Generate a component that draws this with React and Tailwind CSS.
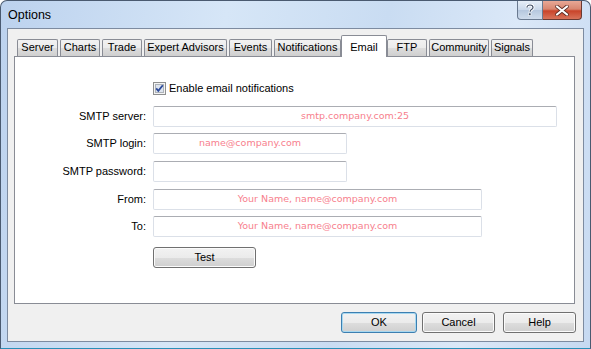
import React from "react";

const tabs = [
  { label: "Server", w: "w-[41px]", ml: "ml-0" },
  { label: "Charts", w: "w-[40px]", ml: "ml-[2px]" },
  { label: "Trade", w: "w-[40px]", ml: "ml-[2px]" },
  { label: "Expert Advisors", w: "w-[83px]", ml: "ml-[2px]" },
  { label: "Events", w: "w-[43px]", ml: "ml-[2px]" },
  { label: "Notifications", w: "w-[67px]", ml: "ml-[2px]" },
  { label: "Email", w: "w-[46px]", ml: "ml-0", active: true },
  { label: "FTP", w: "w-[40px]", ml: "ml-0" },
  { label: "Community", w: "w-[60px]", ml: "ml-[2px]" },
  { label: "Signals", w: "w-[42px]", ml: "ml-[2px]" },
];

const Tab = ({ label, w, ml, active }) =>
  active ? (
    <div
      className={`${w} ${ml} relative z-10 h-[22px] mb-[-1px] flex justify-center pt-[3px] bg-white border border-b-0 border-[#898c95] rounded-t-[2px]`}
    >
      {label}
    </div>
  ) : (
    <div
      className={`${w} ${ml} h-[17px] flex items-center justify-center pb-[1px] border border-b-0 border-[#898c95] rounded-t-[2px] bg-[linear-gradient(#f2f2f2,#ebebeb_50%,#dddddd_51%,#cfcfcf)]`}
    >
      {label}
    </div>
  );

const Field = ({ label, w, value, mt }) => (
  <div className={`flex items-center ${mt}`}>
    <div className="w-[131px] text-right">{label}</div>
    <div
      className={`${w} ml-[7px] h-[21px] flex items-center justify-center rounded-[2px] border border-[#dbe0e8] border-t-[#abadb3] bg-white text-[9.5px] text-[#f7808d] font-['DejaVu_Sans',sans-serif]`}
    >
      {value}
    </div>
  </div>
);

const Button = ({ children, w, focus }) => (
  <div
    className={`${w} h-[21px] flex items-center justify-center rounded-[3px] border ${
      focus ? "border-[#3c7fb1] shadow-[inset_0_0_0_1px_#a8d8f0]" : "border-[#707070] shadow-[inset_0_0_0_1px_#fbfbfb]"
    } bg-[linear-gradient(#f2f2f2,#ebebeb_50%,#dddddd_51%,#cfcfcf)]`}
  >
    {children}
  </div>
);

export default function App() {
  return (
    <div className="w-[591px] h-[349px] flex flex-col rounded-t-[7px] border border-[#4a5a70] border-b-[#2a8fb8] bg-[linear-gradient(100deg,#bcd2ee,#d6e6f7_35%,#c9dcf2_60%,#dbe8f8_80%,#c6d9f1)] font-['Liberation_Sans',Arial,sans-serif] text-[11px] text-black overflow-hidden">
      {/* title bar */}
      <div className="h-[27px] flex items-start">
        <div className="pl-[7px] pt-[5px] text-[12.5px] text-black">Options</div>
        <div className="flex-1" />
        <div className="flex mr-[8px]">
          <div className="w-[26px] h-[19px] flex items-center justify-center rounded-bl-[4px] border border-t-0 border-[#6a7a90] bg-[linear-gradient(#e6eef8,#c9d8ea_50%,#b5c7de_51%,#cfdcec)]">
            <svg width="10" height="12" viewBox="0 0 10 12">
              <path
                d="M2 3.5C2 1.8 3.3 1 5 1s3 .8 3 2.4c0 1.6-1.6 2-2.3 2.8-.4.4-.5.9-.5 1.6"
                fill="none"
                stroke="#fff"
                strokeWidth="3"
              />
              <path
                d="M2 3.5C2 1.8 3.3 1 5 1s3 .8 3 2.4c0 1.6-1.6 2-2.3 2.8-.4.4-.5.9-.5 1.6"
                fill="none"
                stroke="#45536a"
                strokeWidth="1.2"
              />
              <rect x="3.6" y="9" width="2.4" height="2.4" fill="#45536a" stroke="#fff" strokeWidth="0.6" />
            </svg>
          </div>
          <div className="w-[39px] h-[19px] flex items-center justify-center rounded-br-[4px] border border-t-0 border-l-0 border-[#6a3a32] bg-[linear-gradient(#e8a896,#d88670_45%,#c9442a_55%,#d8735a)]">
            <svg width="14" height="11" viewBox="0 0 14 11">
              <path d="M2 1.5 L12 9.5 M12 1.5 L2 9.5" stroke="#5a2a22" strokeWidth="3.6" strokeLinecap="round" />
              <path d="M2 1.5 L12 9.5 M12 1.5 L2 9.5" stroke="#fff" strokeWidth="2.2" strokeLinecap="round" />
            </svg>
          </div>
        </div>
      </div>

      {/* client area */}
      <div className="mx-[6px] h-[314px] flex flex-col border border-[#7d8ba0] bg-[#f0f0f0] pl-[6px] pt-[6px]">
        <div className="h-[21px] flex items-end pl-[3px]">
          {tabs.map((t) => (
            <Tab key={t.label} {...t} />
          ))}
        </div>

        <div className="w-[561px] h-[248px] border border-[#898c95] bg-white flex flex-col pt-[25px]">
          <div className="flex items-center h-[13px] pl-[138px]">
            <svg width="13" height="13" viewBox="0 0 13 13">
              <rect x="0.5" y="0.5" width="12" height="12" fill="#f4f4f4" stroke="#8e8f8f" />
              <rect x="2.5" y="2.5" width="8" height="8" fill="#dde4ef" stroke="#aeb3b9" />
              <path d="M3.2 6.4 L5.3 8.8 L9.8 3.2" fill="none" stroke="#2c4a9a" strokeWidth="1.8" />
            </svg>
            <span className="ml-[3px]">Enable email notifications</span>
          </div>

          <Field label="SMTP server:" w="w-[404px]" value="smtp.company.com:25" mt="mt-[11px]" />
          <Field label="SMTP login:" w="w-[194px]" value="name@company.com" mt="mt-[6px]" />
          <Field label="SMTP password:" w="w-[194px]" value="" mt="mt-[7px]" />
          <Field label="From:" w="w-[329px]" value="Your Name, name@company.com" mt="mt-[7px]" />
          <Field label="To:" w="w-[329px]" value="Your Name, name@company.com" mt="mt-[6px]" />

          <div className="mt-[10px] ml-[138px]">
            <Button w="w-[103px]">Test</Button>
          </div>
        </div>

        <div className="flex mt-[8px] pl-[327px]">
          <Button w="w-[76px]" focus>
            OK
          </Button>
          <div className="ml-[5px]">
            <Button w="w-[73px]">Cancel</Button>
          </div>
          <div className="ml-[8px]">
            <Button w="w-[73px]">Help</Button>
          </div>
        </div>
      </div>
    </div>
  );
}
